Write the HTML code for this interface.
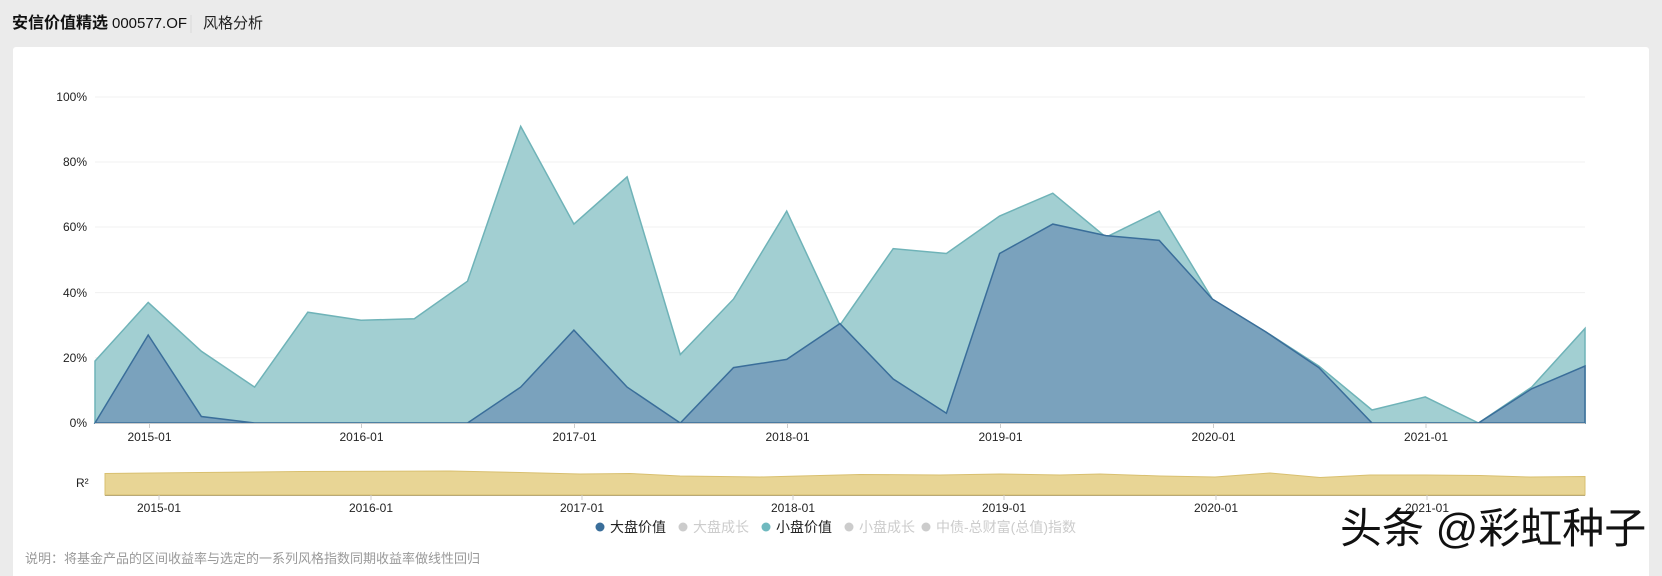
<!DOCTYPE html>
<html><head><meta charset="utf-8"><style>
html,body{margin:0;padding:0;width:1662px;height:576px;overflow:hidden;background:#ebebeb;font-family:"Liberation Sans","Noto Sans CJK SC",sans-serif}
</style></head><body>
<svg width="1662" height="576" xmlns="http://www.w3.org/2000/svg" style="position:absolute;left:0;top:0;font-family:'Liberation Sans','Noto Sans CJK SC',sans-serif">
<rect x="0" y="0" width="1662" height="576" fill="#ebebeb"/>
<rect x="13" y="47" width="1636" height="540" rx="3" fill="#fff"/>
<text x="12" y="28" font-size="16" font-weight="bold" fill="#111">安信价值精选</text>
<text x="112" y="28" font-size="15" fill="#111">000577.OF</text>
<line x1="191" y1="15" x2="191" y2="33" stroke="#d8d8d8"/>
<text x="203" y="28" font-size="15" fill="#222">风格分析</text>
<g stroke="#f0f0f0" stroke-width="1">
<line x1="95" y1="97" x2="1585" y2="97"/><line x1="95" y1="162" x2="1585" y2="162"/><line x1="95" y1="227" x2="1585" y2="227"/><line x1="95" y1="292.6" x2="1585" y2="292.6"/><line x1="95" y1="357.8" x2="1585" y2="357.8"/>
</g>
<g font-size="12" fill="#222" text-anchor="end">
<text x="87" y="101">100%</text><text x="87" y="166">80%</text><text x="87" y="231">60%</text><text x="87" y="297">40%</text><text x="87" y="362">20%</text><text x="87" y="427">0%</text>
</g>
<polygon fill="#a2cfd2" stroke="#6fb3b8" stroke-width="1.5" points="95,423 95,361.1 148.2,302.4 201.4,351.3 254.6,387.1 307.8,312.2 361.1,320.3 414.3,318.7 467.5,281.2 520.7,126.3 573.9,224.1 627.1,176.9 680.3,354.5 733.5,299.1 786.7,211.1 839.9,325.2 893.2,248.6 946.4,253.5 999.6,216 1052.8,193.2 1106,237.2 1159.2,211.1 1212.4,299.1 1265.6,331.7 1318.8,366 1372,410 1425.3,396.9 1478.5,423 1531.7,387.1 1585,328.5 1585,423"/>
<polygon fill="#7aa2bd" stroke="#3a6e9a" stroke-width="1.5" points="95,423 148.2,335 201.4,416.5 254.6,423 307.8,423 361.1,423 414.3,423 467.5,423 520.7,387.1 573.9,330.1 627.1,387.1 680.3,423 733.5,367.6 786.7,359.4 839.9,323.6 893.2,379 946.4,413.2 999.6,253.5 1052.8,224.1 1106,235.6 1159.2,240.4 1212.4,299.1 1265.6,331.7 1318.8,367.6 1372,423 1425.3,423 1478.5,423 1531.7,388.8 1585,366 1585,423"/>
<line x1="95" y1="423.5" x2="1585" y2="423.5" stroke="#ccc"/>
<g stroke="#ccc"><line x1="149.5" y1="423" x2="149.5" y2="428"/><line x1="361.5" y1="423" x2="361.5" y2="428"/><line x1="574.5" y1="423" x2="574.5" y2="428"/><line x1="787.5" y1="423" x2="787.5" y2="428"/><line x1="1000.5" y1="423" x2="1000.5" y2="428"/><line x1="1213.5" y1="423" x2="1213.5" y2="428"/><line x1="1426" y1="423" x2="1426" y2="428"/></g>
<g font-size="12" fill="#222" text-anchor="middle">
<text x="149.5" y="441">2015-01</text><text x="361.5" y="441">2016-01</text><text x="574.5" y="441">2017-01</text><text x="787.5" y="441">2018-01</text><text x="1000.5" y="441">2019-01</text><text x="1213.5" y="441">2020-01</text><text x="1426" y="441">2021-01</text>
</g>
<text x="76" y="487" font-size="12" fill="#222">R²</text>
<polygon fill="#e8d595" stroke="#d9c070" stroke-width="1" points="105,495 105,473.5 200,472.5 300,471.5 450,471 520,472.5 580,474 630,473.5 680,476 760,477 800,476 860,474.5 940,475 1000,474 1060,475 1100,474 1160,476 1215,477 1270,473 1320,477.5 1370,475 1425,475 1480,475.5 1530,477 1585,476.5 1585,495"/>
<line x1="105" y1="495.5" x2="1585" y2="495.5" stroke="#b8a978"/>
<g stroke="#ccc"><line x1="159" y1="495" x2="159" y2="500"/><line x1="371" y1="495" x2="371" y2="500"/><line x1="582" y1="495" x2="582" y2="500"/><line x1="793" y1="495" x2="793" y2="500"/><line x1="1004" y1="495" x2="1004" y2="500"/><line x1="1216" y1="495" x2="1216" y2="500"/><line x1="1427" y1="495" x2="1427" y2="500"/></g>
<g font-size="12" fill="#222" text-anchor="middle">
<text x="159" y="512">2015-01</text><text x="371" y="512">2016-01</text><text x="582" y="512">2017-01</text><text x="793" y="512">2018-01</text><text x="1004" y="512">2019-01</text><text x="1216" y="512">2020-01</text><text x="1427" y="512">2021-01</text>
</g>
<g font-size="14">
<circle cx="600" cy="527" r="4.5" fill="#3a6e9a"/><text x="610" y="532" fill="#222">大盘价值</text>
<circle cx="683" cy="527" r="4.5" fill="#ccc"/><text x="693" y="532" fill="#ccc">大盘成长</text>
<circle cx="766" cy="527" r="4.5" fill="#6fb9bf"/><text x="776" y="532" fill="#222">小盘价值</text>
<circle cx="849" cy="527" r="4.5" fill="#ccc"/><text x="859" y="532" fill="#ccc">小盘成长</text>
<circle cx="926" cy="527" r="4.5" fill="#ccc"/><text x="936" y="532" fill="#ccc">中债-总财富(总值)指数</text>
</g>
<text x="25" y="563" font-size="13" fill="#999">说明：将基金产品的区间收益率与选定的一系列风格指数同期收益率做线性回归</text>
<text x="1340" y="543" font-size="42" fill="#111">头条 @彩虹种子</text>
</svg>
</body></html>
